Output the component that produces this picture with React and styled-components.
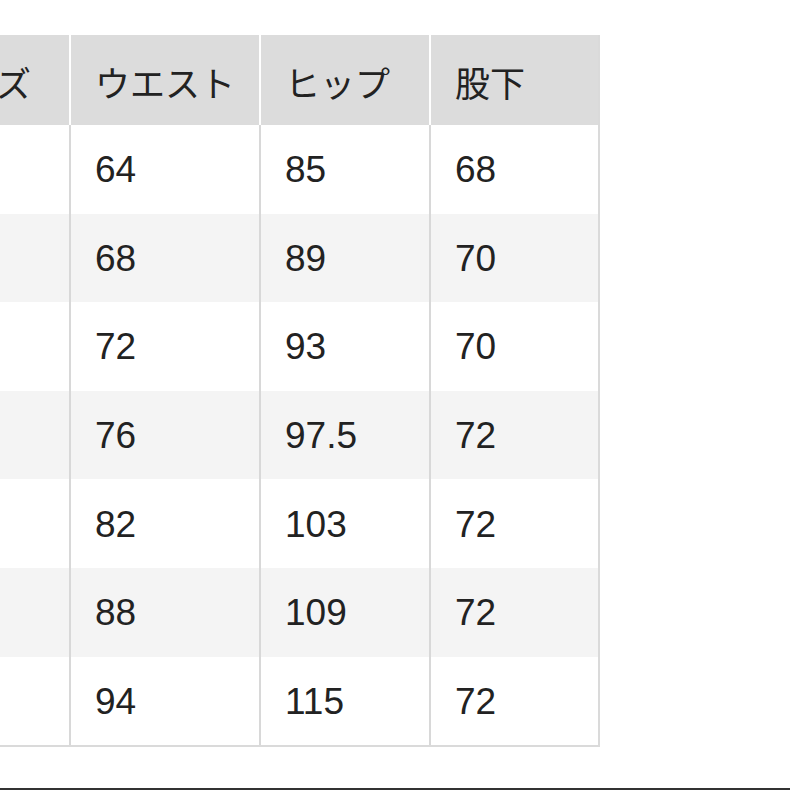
import React from 'react';
import styled, { createGlobalStyle } from 'styled-components';

const GlobalStyle = createGlobalStyle`
  html, body {
    margin: 0;
    padding: 0;
    background: #fff;
    overflow: hidden;
  }
  body {
    width: 790px;
    height: 790px;
  }
`;

const Page = styled.div`
  display: flex;
  flex-direction: column;
  width: 790px;
  height: 790px;
  padding-top: 35px;
  box-sizing: border-box;
`;

const Table = styled.div`
  display: flex;
  flex-direction: column;
  width: 695px;
  margin-left: -97px;
  border-right: 2px solid #dadada;
  border-bottom: 2px solid #dadada;
`;

const Row = styled.div`
  display: grid;
  grid-template-columns: 168px 190px 170px 165px;
  height: ${(props) => (props.head ? '90px' : '88.6px')};
  background: ${(props) => {
    if (props.head) return '#dcdcdc';
    return props.shaded ? '#f4f4f4' : '#ffffff';
  }};
`;

const Cell = styled.div`
  display: flex;
  align-items: center;
  box-sizing: border-box;
  padding-left: 24px;
  padding-top: 2px;
  color: #222;
  white-space: nowrap;
  border-right: ${(props) => (props.last ? 'none' : props.head ? '2px solid #ffffff' : '2px solid #d8d8d8')};
  font-family: ${(props) =>
    props.head
      ? '"Noto Sans CJK JP", "Noto Sans", sans-serif'
      : '"Liberation Sans", Arial, "Noto Sans CJK JP", sans-serif'};
  font-size: ${(props) => (props.head ? '35px' : '37px')};
  font-weight: 400;
`;

const BottomRule = styled.div`
  margin-top: auto;
  height: 2px;
  width: 100%;
  background: #333;
`;

const headers = ['サイズ', 'ウエスト', 'ヒップ', '股下'];

// first column (size labels) lies outside the visible area
const rows = [
  ['', '64', '85', '68'],
  ['', '68', '89', '70'],
  ['', '72', '93', '70'],
  ['', '76', '97.5', '72'],
  ['', '82', '103', '72'],
  ['', '88', '109', '72'],
  ['', '94', '115', '72'],
];

function App() {
  return (
    <Page>
      <GlobalStyle />
      <Table>
        <Row head>
          {headers.map((h, i) => (
            <Cell head key={h} last={i === headers.length - 1}>
              {h}
            </Cell>
          ))}
        </Row>
        {rows.map((r, idx) => (
          <Row key={idx} shaded={idx % 2 === 1}>
            {r.map((v, i) => (
              <Cell key={i} last={i === r.length - 1}>
                {v}
              </Cell>
            ))}
          </Row>
        ))}
      </Table>
      <BottomRule />
    </Page>
  );
}

export default App;
